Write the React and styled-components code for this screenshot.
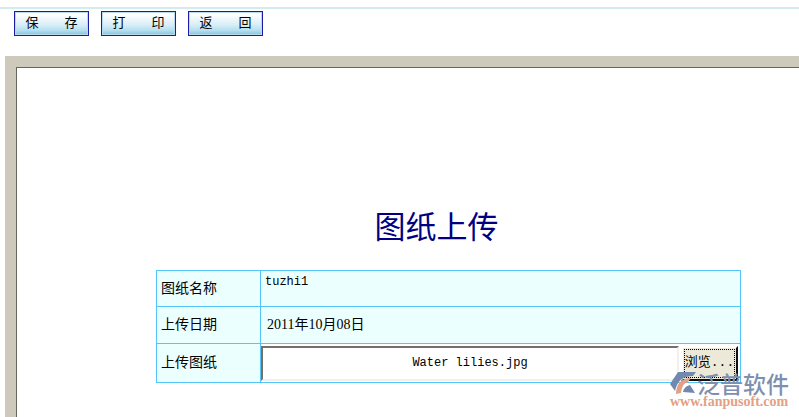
import React, { useState } from "react";
import styled, { createGlobalStyle } from "styled-components";

const actions = ["保　　存", "打　　印", "返　　回"];

function App() {
	const [fileName, setFileName] = useState("Water lilies.jpg");

	return (
		<Page>
			<GlobalStyle />
			<Toolbar>
				{actions.map((action) => (
					<ToolButton key={action} type="button">
						{action}
					</ToolButton>
				))}
			</Toolbar>
			<Frame>
				<Paper>
					<Title>图纸上传</Title>
					<FormTable>
						<tbody>
							<Row $height={36}>
								<LabelCell>图纸名称</LabelCell>
								<ValueCell $align="top">
									<Mono>tuzhi1</Mono>
								</ValueCell>
							</Row>
							<Row $height={37}>
								<LabelCell>上传日期</LabelCell>
								<ValueCell>
									<DateText>2011年10月08日</DateText>
								</ValueCell>
							</Row>
							<Row $height={39}>
								<LabelCell>
									<label htmlFor="drawing">上传图纸</label>
								</LabelCell>
								<UploadCell>
									<Upload>
										<FileInput
											id="drawing"
											type="text"
											value={fileName}
											onChange={(e) => setFileName(e.target.value)}
										/>
										<BrowseButton type="button">
											<span>浏览...</span>
										</BrowseButton>
									</Upload>
								</UploadCell>
							</Row>
						</tbody>
					</FormTable>
				</Paper>
			</Frame>
			<Watermark>
				<Brand>
					<Logo />
					<span>泛普软件</span>
				</Brand>
				<Site>www.fanpusoft.com</Site>
			</Watermark>
		</Page>
	);
}

function Logo() {
	return (
		<svg width="29" height="24" viewBox="0 0 29 24" aria-hidden="true">
			<path d="M10 1H28L25 5C15 5 9 10 7 20L2 13Z" fill="#7189ae" />
			<path d="M8 23C8 13 13 7 23 7L20 11C16 12 14 15 13 22Z" fill="#e3a083" />
			<path d="M15 21C16 17 18 15 22 14L27 22Z" fill="#7189ae" />
		</svg>
	);
}

export default App;

const GlobalStyle = createGlobalStyle`
	* {
		box-sizing: border-box;
	}

	body {
		margin: 0;
		background: #fff;
		overflow: hidden;
	}
`;

const Page = styled.div`
	position: relative;
	display: flex;
	flex-direction: column;
	min-height: 100vh;
	padding-top: 7px;
	color: #000;
	font-family: "Liberation Serif", "Noto Sans CJK SC", serif;
	font-size: 14px;
`;

const Toolbar = styled.div`
	display: flex;
	gap: 12px;
	height: 49px;
	padding: 2px 14px;
	border-top: 2px solid #d5ecec;
`;

const ToolButton = styled.button`
	width: 75px;
	height: 25px;
	padding: 0 0 4px;
	border: 1px solid #1c1ca4;
	box-shadow: inset 0 0 0 1px #b9d9ef;
	background: linear-gradient(#fff 10%, #d9eef7 55%, #b4dff0 80%, #7fc3e0);
	color: #000;
	font-family: "Noto Sans CJK SC", sans-serif;
	font-size: 13px;
	line-height: 18px;
	white-space: nowrap;
`;

const Frame = styled.div`
	display: flex;
	flex: 1;
	margin-left: 5px;
	padding: 11px 0 0 11px;
	background: #cdc9bb;
`;

const Paper = styled.div`
	flex: 1;
	padding: 137px 58px 0 139px;
	border-top: 1px solid #66665c;
	border-left: 1px solid #66665c;
	background: #fff;
`;

const Title = styled.h1`
	margin: 0 0 25px;
	padding-right: 24px;
	color: #000080;
	font-family: "Noto Sans CJK SC", sans-serif;
	font-size: 31px;
	font-weight: 400;
	line-height: 40px;
	text-align: center;
`;

const FormTable = styled.table`
	width: 100%;
	border-collapse: collapse;
	table-layout: fixed;
`;

const Row = styled.tr`
	height: ${(props) => props.$height}px;
`;

const Cell = styled.td`
	padding: 0 4px;
	border: 1px solid #52c6f8;
	background: #ecffff;
	line-height: 20px;
`;

const LabelCell = styled(Cell).attrs({ as: "th", scope: "row" })`
	width: 104px;
	font-weight: 400;
	text-align: left;
`;

const ValueCell = styled(Cell)`
	vertical-align: ${(props) => props.$align || "middle"};
`;

const Mono = styled.span`
	font-family: "Liberation Mono", monospace;
	font-size: 12px;
`;

const DateText = styled.span`
	padding-left: 2px;
`;

const UploadCell = styled(Cell)`
	padding: 1px 2px 1px 0;
	background: #fff;
`;

const Upload = styled.div`
	display: flex;
	gap: 2px;
	height: 35px;
`;

const FileInput = styled.input`
	flex: 1;
	min-width: 0;
	padding: 0;
	border: 2px solid;
	border-color: #77706a #f3f0ea #f3f0ea #77706a;
	background: #fff;
	color: #000;
	font-family: "Liberation Mono", monospace;
	font-size: 12px;
	text-align: center;
`;

const BrowseButton = styled.button`
	width: 57px;
	padding: 1px;
	border: 2px solid;
	border-color: #fff #111 #111 #fff;
	background: #ece9d8;
	color: #000;
	font-family: "Liberation Mono", "Noto Sans CJK SC", monospace;
	font-size: 13px;
	line-height: 20px;
	white-space: nowrap;

	span {
		display: flex;
		align-items: center;
		justify-content: center;
		height: 100%;
		border: 1px dotted #000;
	}
`;

const Watermark = styled.div`
	position: absolute;
	top: 370px;
	right: 10px;
`;

const Brand = styled.div`
	display: flex;
	align-items: center;
	height: 26px;
	color: #7e90b0;
	font-family: "Noto Sans CJK SC", sans-serif;
	font-size: 23px;
	font-weight: 500;
	line-height: 26px;
`;

const Site = styled.div`
	padding-left: 2px;
	color: #e3a083;
	font-size: 14px;
	font-weight: 700;
	line-height: 12px;
`;
